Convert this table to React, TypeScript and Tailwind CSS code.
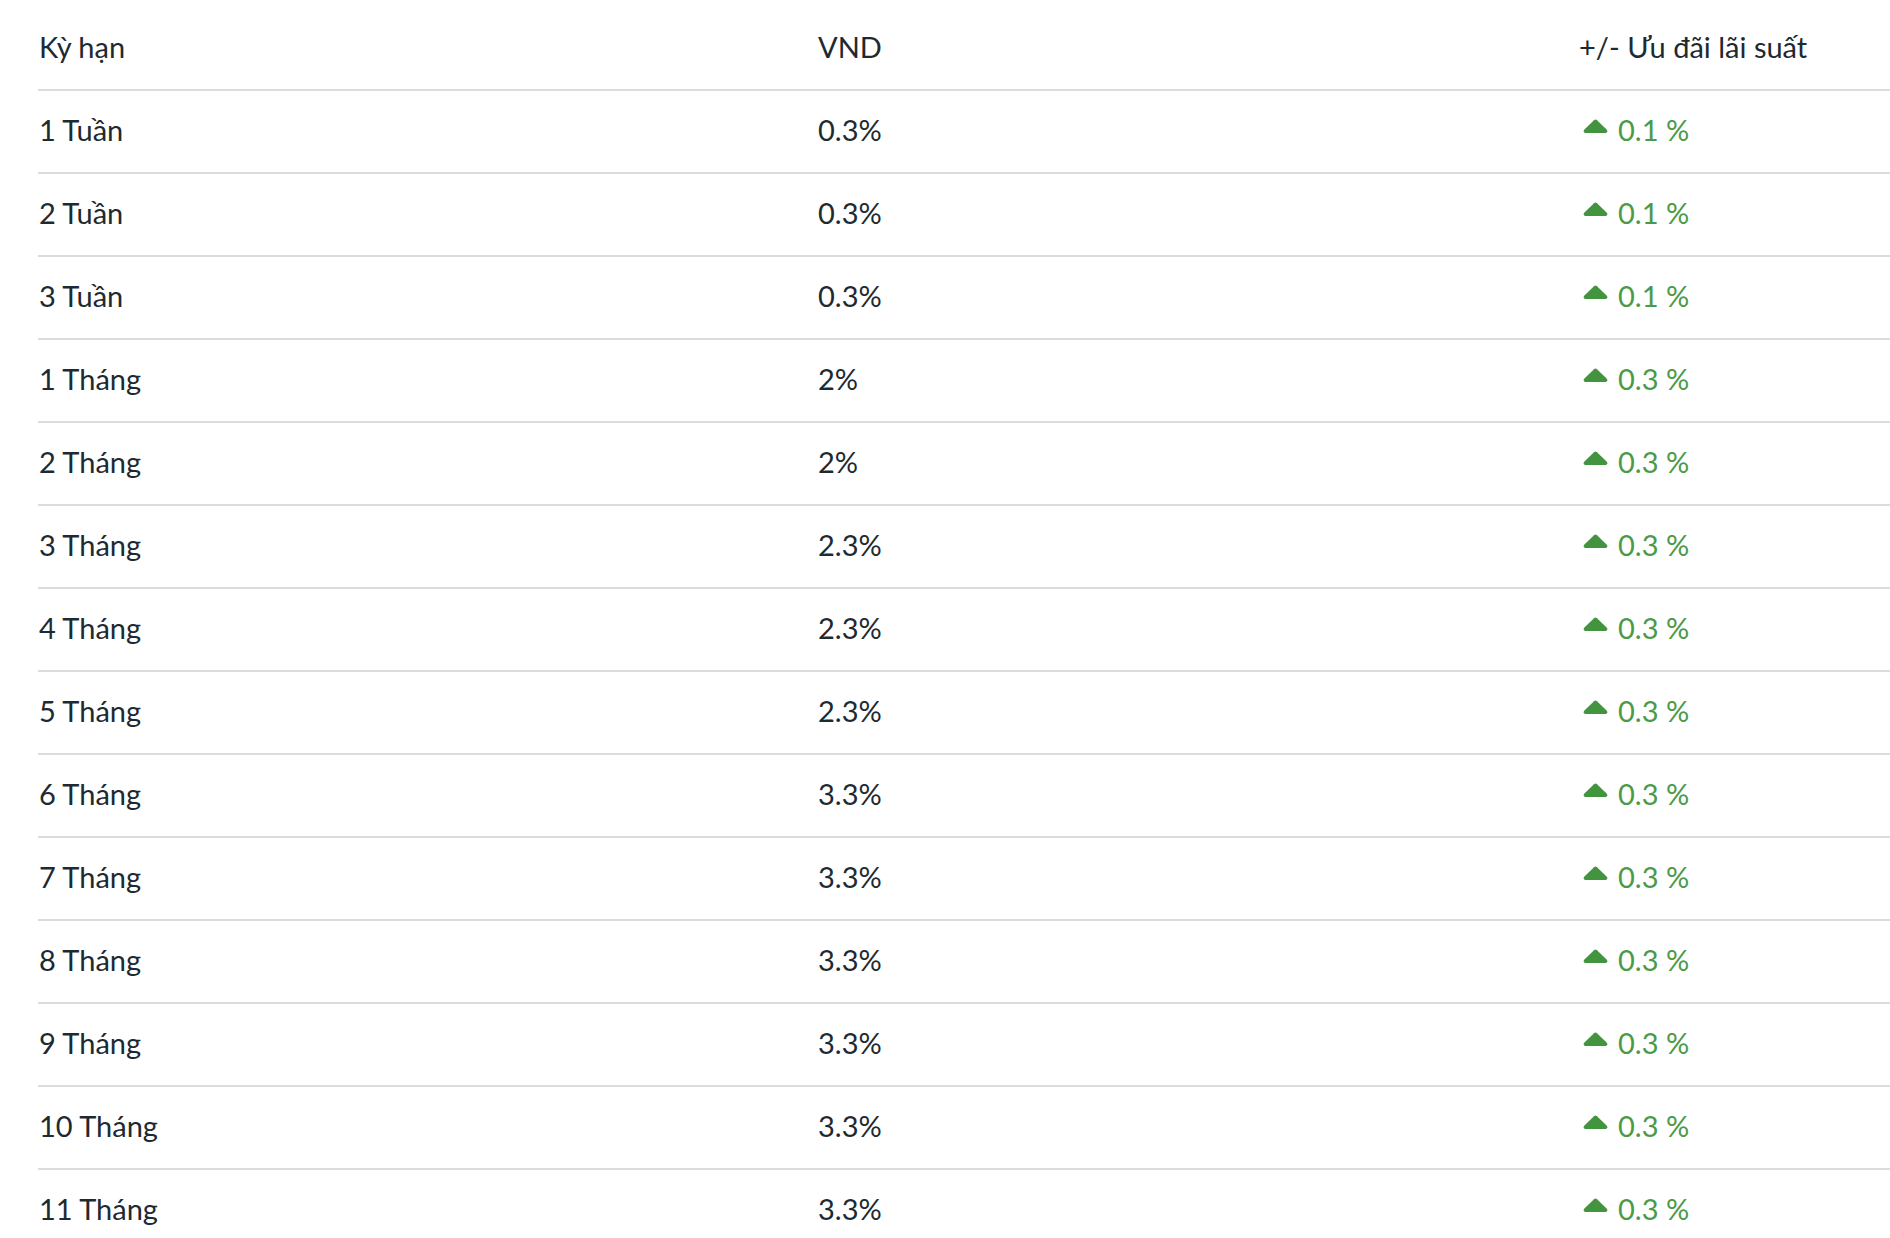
const rows: [string, string, string][] = [
  ["1 Tuần", "0.3%", "0.1 %"],
  ["2 Tuần", "0.3%", "0.1 %"],
  ["3 Tuần", "0.3%", "0.1 %"],
  ["1 Tháng", "2%", "0.3 %"],
  ["2 Tháng", "2%", "0.3 %"],
  ["3 Tháng", "2.3%", "0.3 %"],
  ["4 Tháng", "2.3%", "0.3 %"],
  ["5 Tháng", "2.3%", "0.3 %"],
  ["6 Tháng", "3.3%", "0.3 %"],
  ["7 Tháng", "3.3%", "0.3 %"],
  ["8 Tháng", "3.3%", "0.3 %"],
  ["9 Tháng", "3.3%", "0.3 %"],
  ["10 Tháng", "3.3%", "0.3 %"],
  ["11 Tháng", "3.3%", "0.3 %"],
];

function CaretUp() {
  return (
    <svg viewBox="0 0 25 14" className="h-[14px] w-[25px] shrink-0 text-[#43943f]" fill="currentColor">
      <path d="M11 1.2 Q12.5 -0.2 14 1.2 L23.6 10.6 Q25.2 12.6 23 14 L2 14 Q-0.2 12.6 1.4 10.6 Z" />
    </svg>
  );
}

export default function App() {
  return (
    <div className="min-h-screen overflow-hidden bg-white pl-[38px] font-['Lato','Liberation_Sans',sans-serif] text-[29px] text-[#1e2a31]">
      <div className="w-[1900px]">
        <div className="grid h-[91px] grid-cols-[780px_761px_1fr] items-center border-b-2 border-[#dcdcdc] pt-[4px]">
          <div className="pl-px">Kỳ hạn</div>
          <div>VND</div>
          <div>+/- Ưu đãi lãi suất</div>
        </div>
        {rows.map(([term, vnd, delta]) => (
          <div
            key={term}
            className="grid h-[83px] grid-cols-[780px_761px_1fr] items-center border-b-2 border-[#dcdcdc] pb-[4px]"
          >
            <div className="pl-px">{term}</div>
            <div>{vnd}</div>
            <div className="flex items-center gap-[10px] text-[#4a9a47]">
              <span className="-mt-[8px] pl-[4px]">
                <CaretUp />
              </span>
              <span>{delta}</span>
            </div>
          </div>
        ))}
      </div>
    </div>
  );
}
